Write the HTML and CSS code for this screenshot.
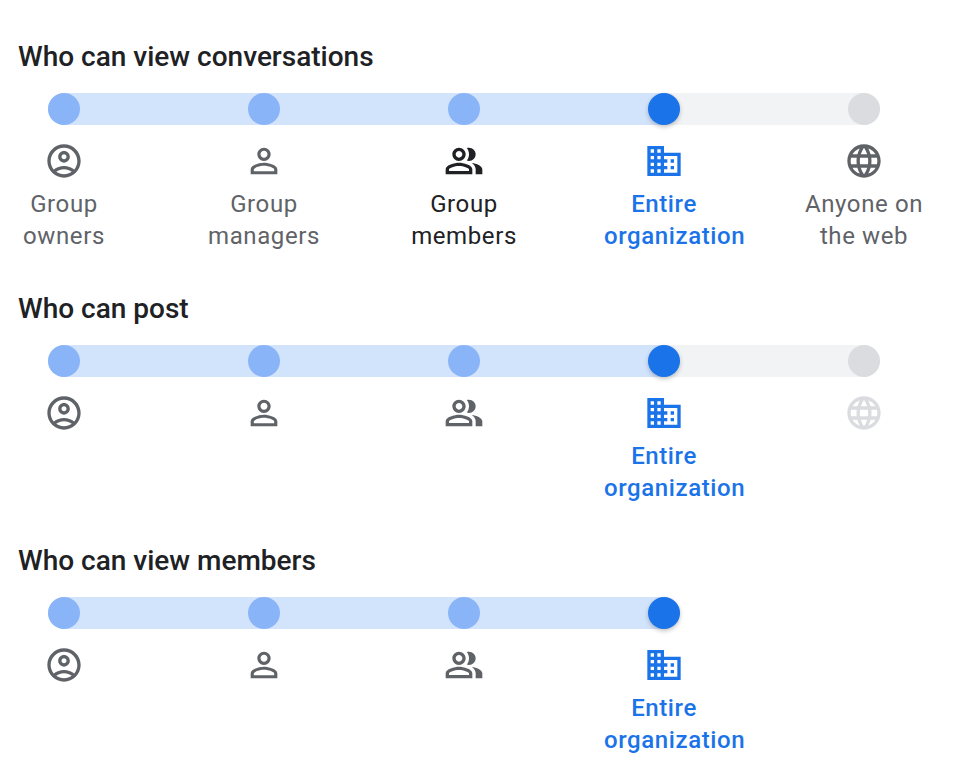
FILE: index.html
```
<!DOCTYPE html>
<html lang="en">
<head>
<meta charset="utf-8">
<title>Group permissions</title>
<link rel="stylesheet" href="styles.css">
</head>
<body>
<svg class="sprite" aria-hidden="true">
  <symbol id="owner" viewBox="0 0 24 24"><path fill-rule="evenodd" d="M12 2C6.48 2 2 6.48 2 12s4.48 10 10 10 10-4.48 10-10S17.52 2 12 2zM7.35 18.5C8.66 17.56 10.26 17 12 17s3.34.56 4.65 1.5c-1.31.94-2.91 1.5-4.65 1.5s-3.34-.56-4.65-1.5zm10.79-1.38C16.45 15.8 14.32 15 12 15s-4.45.8-6.14 2.12C4.7 15.73 4 13.95 4 12c0-4.42 3.58-8 8-8s8 3.58 8 8c0 1.95-.7 3.73-1.86 5.12z"/><path fill-rule="evenodd" d="M12 6c-1.93 0-3.5 1.57-3.5 3.5S10.07 13 12 13s3.5-1.57 3.5-3.5S13.93 6 12 6zm0 5c-.83 0-1.5-.67-1.5-1.5S11.17 8 12 8s1.5.67 1.5 1.5S12.83 11 12 11z"/></symbol>
  <symbol id="manager" viewBox="0 0 24 24"><path fill-rule="evenodd" d="M12 5.9c1.16 0 2.1.94 2.1 2.1s-.94 2.1-2.1 2.1S9.9 9.16 9.9 8s.94-2.1 2.1-2.1m0 9c2.97 0 6.1 1.46 6.1 2.1v1.1H5.9V17c0-.64 3.13-2.1 6.1-2.1M12 4C9.79 4 8 5.79 8 8s1.79 4 4 4 4-1.79 4-4-1.79-4-4-4zm0 9c-2.67 0-8 1.34-8 4v3h16v-3c0-2.66-5.33-4-8-4z"/></symbol>
  <symbol id="members" viewBox="0 0 24 24"><path fill-rule="evenodd" d="M16.67 13.13C18.04 14.06 19 15.32 19 17v3h4v-3c0-2.18-3.57-3.47-6.33-3.87zM15 12c2.21 0 4-1.79 4-4s-1.79-4-4-4c-.47 0-.91.1-1.33.24C14.5 5.27 15 6.58 15 8s-.5 2.73-1.33 3.76c.42.14.86.24 1.33.24zM9 12c2.21 0 4-1.79 4-4s-1.79-4-4-4-4 1.79-4 4 1.79 4 4 4zm0-6c1.1 0 2 .9 2 2s-.9 2-2 2-2-.9-2-2 .9-2 2-2zM9 13c-2.67 0-8 1.34-8 4v3h16v-3c0-2.66-5.33-4-8-4zm6 5H3v-.99C3.2 16.29 6.3 15 9 15s5.8 1.29 6 2v1z"/></symbol>
  <symbol id="organization" viewBox="0 0 24 24"><path d="M12 7V3H2v18h20V7H12zM6 19H4v-2h2v2zm0-4H4v-2h2v2zm0-4H4V9h2v2zm0-4H4V5h2v2zm4 12H8v-2h2v2zm0-4H8v-2h2v2zm0-4H8V9h2v2zm0-4H8V5h2v2zm10 12h-8v-2h2v-2h-2v-2h2v-2h-2V9h8v10zm-2-8h-2v2h2v-2zm0 4h-2v2h2v-2z"/></symbol>
  <symbol id="web" viewBox="0 0 24 24"><path d="M11.99 2C6.47 2 2 6.48 2 12s4.47 10 9.99 10C17.52 22 22 17.52 22 12S17.52 2 11.99 2zm6.93 6h-2.95c-.32-1.25-.78-2.45-1.38-3.56 1.84.63 3.37 1.91 4.33 3.56zM12 4.04c.83 1.2 1.48 2.53 1.91 3.96h-3.82c.43-1.43 1.08-2.76 1.91-3.96zM4.26 14C4.1 13.36 4 12.69 4 12s.1-1.36.26-2h3.38c-.08.66-.14 1.32-.14 2 0 .68.06 1.34.14 2H4.26zm.82 2h2.95c.32 1.25.78 2.45 1.38 3.56-1.84-.63-3.37-1.9-4.33-3.56zm2.95-8H5.08c.96-1.66 2.49-2.93 4.33-3.56C8.81 5.55 8.35 6.75 8.03 8zM12 19.96c-.83-1.2-1.48-2.53-1.91-3.96h3.82c-.43 1.43-1.08 2.76-1.91 3.96zM14.34 14H9.66c-.09-.66-.16-1.32-.16-2 0-.68.07-1.35.16-2h4.68c.09.65.16 1.32.16 2 0 .68-.07 1.34-.16 2zm.25 5.56c.6-1.11 1.06-2.31 1.38-3.56h2.95c-.96 1.65-2.49 2.93-4.33 3.56zM16.36 14c.08-.66.14-1.32.14-2 0-.68-.06-1.34-.14-2h3.38c.16.64.26 1.31.26 2s-.1 1.36-.26 2h-3.38z"/></symbol>
</svg>
<main class="settings">
  <section class="setting">
    <h2 class="title">Who can view conversations</h2>
    <div class="track"><i class="dot"></i><i class="dot"></i><i class="dot"></i><i class="dot selected"></i><i class="dot off"></i></div>
    <ul class="options">
      <li class="option"><svg class="icon"><use href="#owner"/></svg><span class="label">Group<br>owners</span></li>
      <li class="option"><svg class="icon"><use href="#manager"/></svg><span class="label">Group<br>managers</span></li>
      <li class="option hovered"><svg class="icon"><use href="#members"/></svg><span class="label">Group<br>members</span></li>
      <li class="option current"><svg class="icon"><use href="#organization"/></svg><span class="label">Entire<br>organization</span></li>
      <li class="option"><svg class="icon"><use href="#web"/></svg><span class="label">Anyone on<br>the web</span></li>
    </ul>
  </section>
  <section class="setting">
    <h2 class="title">Who can post</h2>
    <div class="track"><i class="dot"></i><i class="dot"></i><i class="dot"></i><i class="dot selected"></i><i class="dot off"></i></div>
    <ul class="options">
      <li class="option"><svg class="icon"><use href="#owner"/></svg></li>
      <li class="option"><svg class="icon"><use href="#manager"/></svg></li>
      <li class="option"><svg class="icon"><use href="#members"/></svg></li>
      <li class="option current"><svg class="icon"><use href="#organization"/></svg><span class="label">Entire<br>organization</span></li>
      <li class="option disabled"><svg class="icon"><use href="#web"/></svg></li>
    </ul>
  </section>
  <section class="setting">
    <h2 class="title">Who can view members</h2>
    <div class="track short"><i class="dot"></i><i class="dot"></i><i class="dot"></i><i class="dot selected"></i></div>
    <ul class="options">
      <li class="option"><svg class="icon"><use href="#owner"/></svg></li>
      <li class="option"><svg class="icon"><use href="#manager"/></svg></li>
      <li class="option"><svg class="icon"><use href="#members"/></svg></li>
      <li class="option current"><svg class="icon"><use href="#organization"/></svg><span class="label">Entire<br>organization</span></li>
    </ul>
  </section>
</main>
</body>
</html>
```
FILE: styles.css
```
* { box-sizing: border-box; }
body {
  margin: 0;
  background: #fff;
  font-family: Roboto, "Liberation Sans", sans-serif;
  color: #202124;
  overflow: hidden;
}
.sprite { display: none; }
.settings { padding-top: 37px; }
.setting { height: 252px; }
.title {
  margin: 0 0 16px 18px;
  height: 40px;
  font-size: 28px;
  font-weight: 500;
  line-height: 40px;
  letter-spacing: 0;
}
.track {
  display: flex;
  justify-content: space-between;
  width: 832px;
  height: 32px;
  margin-left: 48px;
  border-radius: 16px;
  background: linear-gradient(to right, #d2e3fc 616px, #f1f3f4 616px);
}
.track.short { width: 632px; }
.dot {
  width: 32px;
  height: 32px;
  border-radius: 50%;
  background: #8ab4f8;
}
.dot.selected {
  background: #1a73e8;
  box-shadow: 0 2px 4px rgba(60, 64, 67, .3);
}
.dot.off { background: #dadce0; }
.options {
  display: grid;
  grid-template-columns: repeat(5, 200px);
  margin: 16px 0 0 -36px;
  padding: 0;
  list-style: none;
}
.option {
  display: flex;
  flex-direction: column;
  align-items: center;
  gap: 7px;
  color: #5f6368;
  font-size: 24px;
  line-height: 32px;
  letter-spacing: .6px;
  text-align: center;
}
.label { width: 120px; white-space: nowrap; }
.icon { width: 40px; height: 40px; fill: currentColor; }
.hovered { color: #202124; }
.current { color: #1a73e8; font-weight: 500; }
.disabled { color: #dadce0; }
```
